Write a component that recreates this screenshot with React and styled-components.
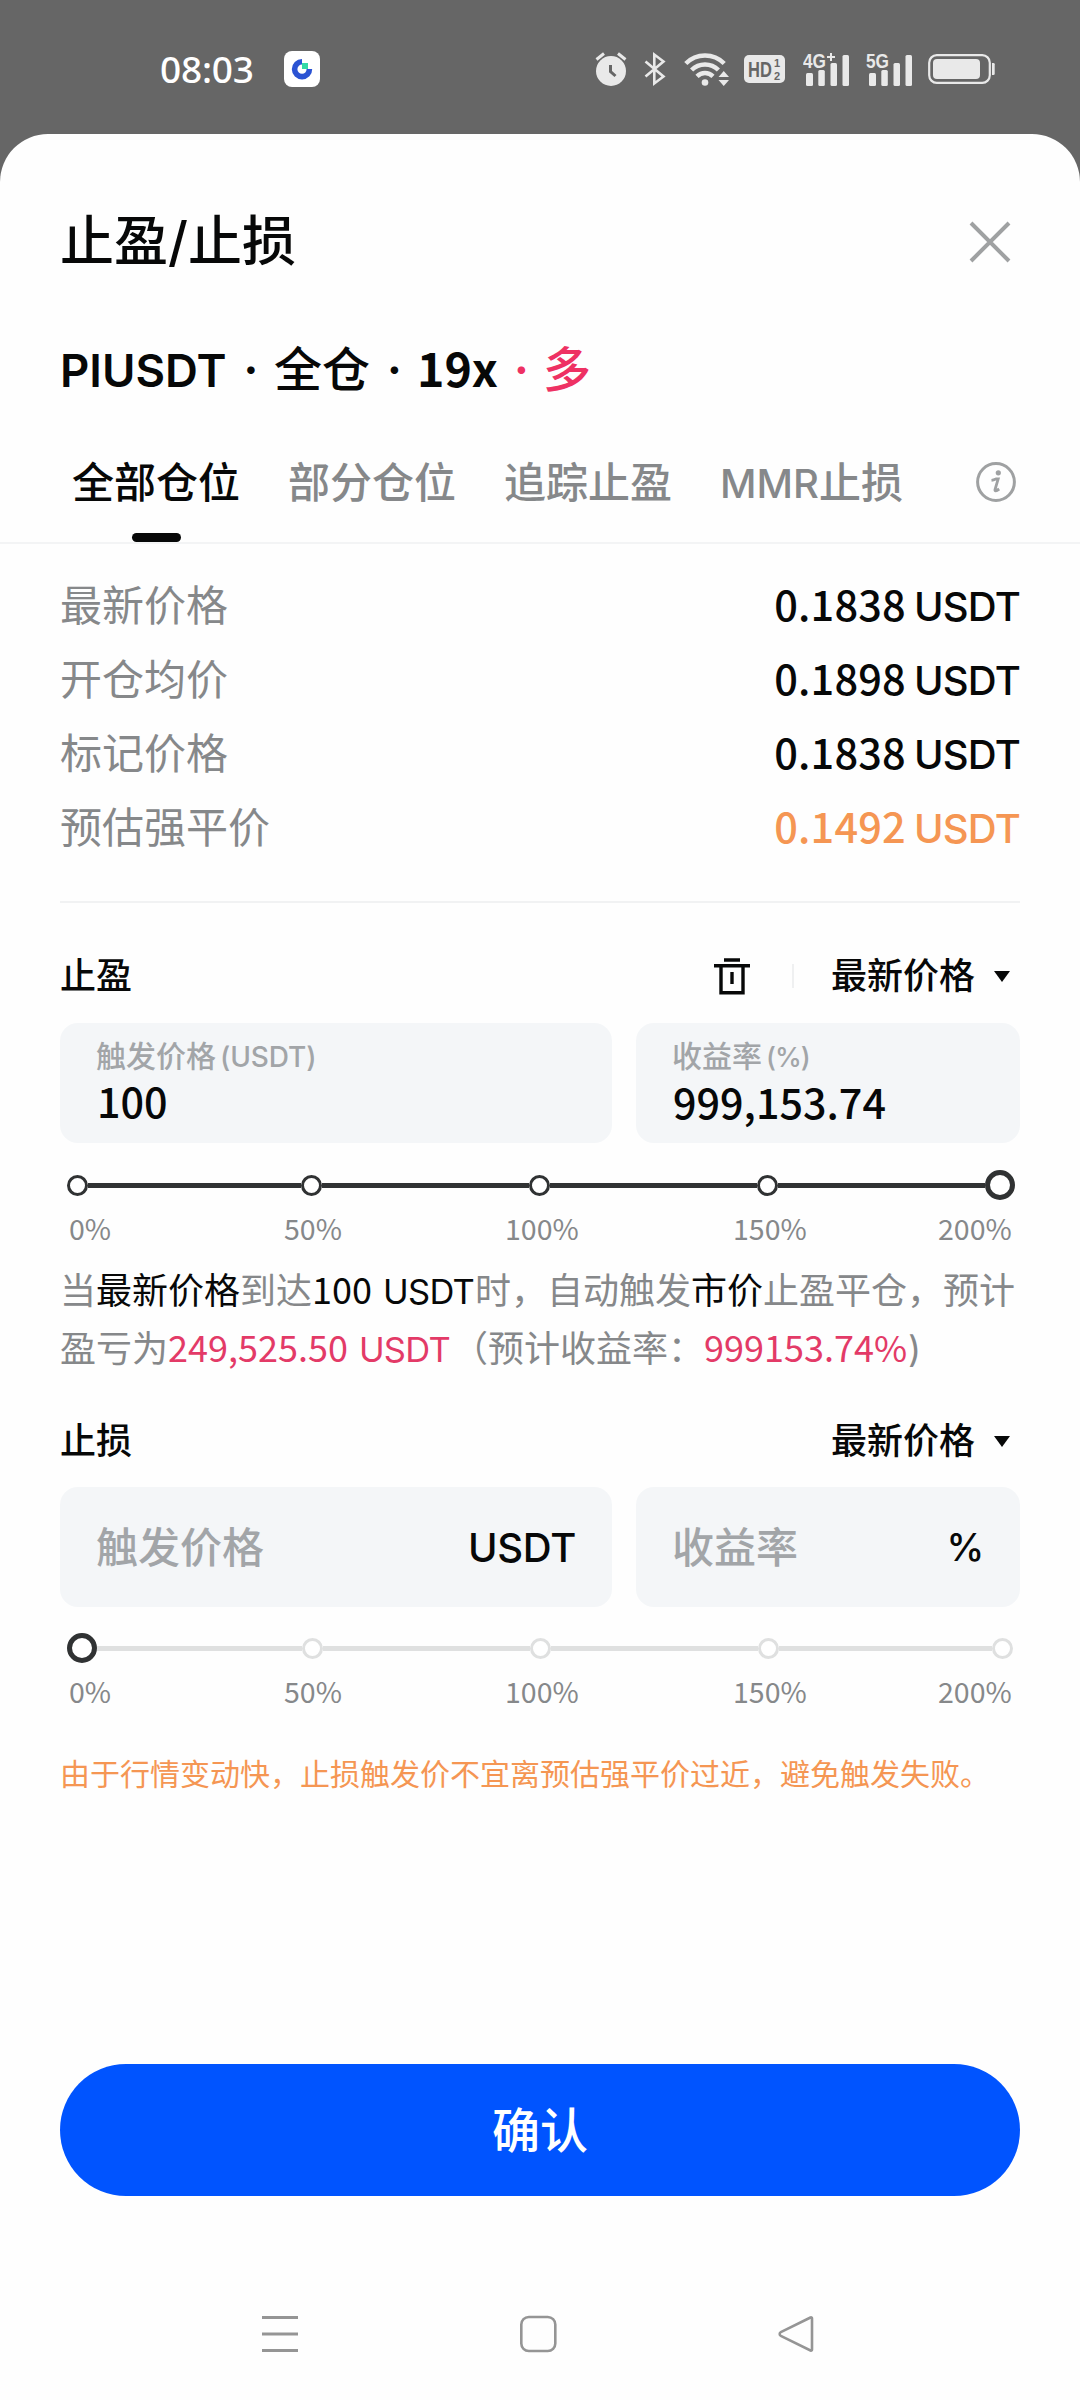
import React from "react";
import styled, { createGlobalStyle } from "styled-components";

const NUMERIC = '"Noto Sans CJK SC", sans-serif';

const Global = createGlobalStyle`
  * { box-sizing: border-box; }
  body {
    margin: 0;
    background: #666666;
    color: #070808;
    font-family: Inter, "Noto Sans CJK SC", sans-serif;
  }
  button { font: inherit; color: inherit; border: 0; padding: 0; background: none; }
`;

const Screen = styled.div`
  width: 1080px;
  height: 2400px;
  display: flex;
  flex-direction: column;
  background: #666666;
  overflow: hidden;
`;

const StatusBar = styled.header`
  height: 134px;
  padding: 4px 85px 0 160px;
  display: flex;
  align-items: center;
  flex: none;
`;

const Clock = styled.span`
  width: 124px;
  line-height: 48px;
  font-family: "Noto Sans", sans-serif;
  font-size: 37px;
  font-weight: 500;
  letter-spacing: -0.2px;
  color: #fff;
`;

const StatusIcons = styled.div`
  margin-left: auto;
  display: flex;
  align-items: center;
  color: #e9e9e9;
  svg { display: block; }
`;

const Spacer = styled.i`
  width: ${(p) => p.$w}px;
`;

const Sheet = styled.main`
  flex: 1;
  background: #fefefe;
  border-radius: 48px 48px 0 0;
  display: flex;
  flex-direction: column;
`;

const Header = styled.div`
  height: 216px;
  padding: 0 67px 0 60px;
  display: flex;
  align-items: center;
  justify-content: space-between;
`;

const Title = styled.h1`
  margin: 0;
  font-size: 54px;
  line-height: 72px;
  font-weight: 500;
`;

const Position = styled.div`
  height: 80px;
  margin: -23px 0 3px;
  padding-left: 60px;
  display: flex;
  align-items: baseline;
  font-size: 48px;
  font-weight: 600;
  line-height: 80px;
`;

const Part = styled.span`
  width: ${(p) => p.$w}px;
  font-family: ${(p) => (p.$numeric ? NUMERIC : "inherit")};
  font-size: ${(p) => p.$size || 48}px;
  font-weight: ${(p) => p.$weight || 600};
  color: ${(p) => p.$color || "inherit"};
  text-align: ${(p) => p.$align || "left"};
  white-space: nowrap;
`;

const Tabs = styled.nav`
  height: 134px;
  padding: 0 64px 0 72px;
  display: flex;
  align-items: stretch;
  gap: 48px;
  border-bottom: 2px solid #f3f4f5;
`;

const Tab = styled.button`
  display: flex;
  flex-direction: column;
  align-items: center;
  justify-content: space-between;
  padding-top: 43px;
  font-size: 42px;
  line-height: 60px;
  font-weight: 500;
  color: ${(p) => (p.$active ? "#070808" : "#86888a")};
  white-space: nowrap;
  &::after {
    content: "";
    width: 49px;
    height: 9px;
    border-radius: 5px;
    background: ${(p) => (p.$active ? "#070808" : "transparent")};
  }
`;

const Latin = styled.span`
  font-size: ${(p) => p.$size}px;
  letter-spacing: ${(p) => p.$ls || 0}px;
`;

const InfoButton = styled.button`
  margin-left: auto;
  display: flex;
  align-items: center;
  padding-top: 12px;
`;

const Body = styled.div`
  padding: 0 60px;
`;

const Prices = styled.dl`
  margin: 0;
  padding: 24px 0 37px;
  border-bottom: 2px solid #f1f2f3;
`;

const PriceRow = styled.div`
  height: 74px;
  display: flex;
  align-items: center;
  justify-content: space-between;
`;

const PriceName = styled.dt`
  padding-bottom: 6px;
  font-size: 42px;
  color: #86888a;
`;

const PriceValue = styled.dd`
  margin: 0;
  padding-bottom: 5px;
  display: flex;
  align-items: baseline;
  gap: 8px;
  font-size: 40px;
  font-weight: 500;
  letter-spacing: -0.8px;
  color: ${(p) => (p.$warn ? "#f59653" : "#070808")};
`;

const PriceNumber = styled.span`
  font-family: ${NUMERIC};
  font-size: 41.5px;
  letter-spacing: 0.2px;
`;

const SectionHead = styled.div`
  height: 60px;
  margin-top: ${(p) => p.$top}px;
  padding-right: 10px;
  display: flex;
  align-items: center;
  font-size: 36px;
  line-height: 60px;
  font-weight: 500;
`;

const SectionTitle = styled.span`
  flex: 1;
`;

const Rule = styled.i`
  width: 2px;
  height: 24px;
  margin: 0 37px 0 42px;
  background: #eff0f1;
`;

const Picker = styled.button`
  display: flex;
  align-items: center;
  gap: 19px;
`;

const Fields = styled.div`
  display: grid;
  grid-template-columns: 552px 384px;
  gap: 24px;
  margin-top: ${(p) => p.$top || 17}px;
`;

const Field = styled.label`
  height: 120px;
  padding: 0 36px;
  border-radius: 18px;
  background: #f4f6f8;
  display: flex;
  flex-direction: ${(p) => (p.$filled ? "column" : "row")};
  align-items: ${(p) => (p.$filled ? "flex-start" : "center")};
  justify-content: ${(p) => (p.$filled ? "flex-start" : "space-between")};
`;

const FieldLabel = styled.span`
  margin-top: 14px;
  font-size: 30px;
  line-height: 38px;
  font-weight: 500;
  word-spacing: -4px;
  color: #a2a5a8;
`;

const FieldValue = styled.span`
  padding-left: 1px;
  font-family: ${NUMERIC};
  font-size: 41.3px;
  line-height: 48px;
  font-weight: 500;
`;

const Placeholder = styled.span`
  padding-bottom: 6px;
  font-size: 42px;
  font-weight: 500;
  color: #a2a5a8;
`;

const Unit = styled.span`
  font-size: ${(p) => p.$size || 40}px;
  font-weight: 500;
  letter-spacing: -0.3px;
`;

const Track = styled.div`
  height: 32px;
  margin-top: ${(p) => p.$top}px;
  padding-left: 7px;
  display: flex;
  align-items: center;
`;

const Knob = styled.i`
  flex: none;
  width: ${(p) => (p.$big ? 30 : 21)}px;
  height: ${(p) => (p.$big ? 30 : 21)}px;
  border-radius: 50%;
  border: ${(p) => (p.$big ? 5 : 3)}px solid ${(p) => (p.$big || p.$on ? "#303233" : "#dfe0e0")};
  background: #fff;
`;

const Segment = styled.i`
  flex: none;
  width: ${(p) => p.$w}px;
  height: 5px;
  background: ${(p) => (p.$on ? "#303233" : "#dfe0e0")};
`;

const Scale = styled.div`
  display: grid;
  grid-template-columns: 215px 221px 228px 205px auto;
  margin-top: 7px;
  padding: 0 0 2px 9px;
  font-family: ${NUMERIC};
  font-size: 28.5px;
  line-height: 40px;
  color: #86888a;
`;

const Summary = styled.p`
  margin: 12px 0 0;
  width: 970px;
  height: 116px;
  font-size: 36px;
  line-height: 58px;
  color: #86888a;
  white-space: nowrap;
`;

const Strong = styled.span`
  color: #070808;
`;

const Figure = styled.span`
  display: inline-block;
  width: ${(p) => p.$w}px;
  font-size: 34.5px;
  line-height: 40px;
  letter-spacing: -0.7px;
  color: ${(p) => (p.$red ? "#e33a67" : "#070808")};
`;

const FigureNumber = styled.span`
  margin-right: ${(p) => (p.$unit ? 11 : 0)}px;
  font-family: ${NUMERIC};
  font-size: 36px;
  line-height: 30px;
  letter-spacing: 0;
`;

const Warning = styled.p`
  margin: 41px 0 0;
  font-size: 30px;
  line-height: 40px;
  color: #f59653;
  white-space: nowrap;
`;

const Confirm = styled.button`
  width: 960px;
  height: 132px;
  margin: auto 60px 0;
  padding-bottom: 6px;
  border-radius: 66px;
  background: #0054ff;
  color: #fff;
  font-size: 48px;
  font-weight: 500;
`;

const NavBar = styled.footer`
  height: 132px;
  margin-top: 72px;
  padding: 0 266px 0 261px;
  display: flex;
  align-items: center;
  justify-content: space-between;
  svg { display: block; }
`;

const AppLogo = () => (
  <svg width="36" height="36" viewBox="0 0 36 36">
    <rect width="36" height="36" rx="8" fill="#fff" />
    <path d="M18 10.8A7.4 7.4 0 1 0 25.4 18" fill="none" stroke="#2b53d3" strokeWidth="5.6" />
    <rect x="18" y="12" width="6" height="6" fill="#33d9a6" />
  </svg>
);

const AlarmIcon = () => (
  <svg width="32" height="36" viewBox="0 0 32 36" fill="none">
    <circle cx="16" cy="20" r="15" fill="currentColor" />
    <path d="M1.5 8.5 9 2.5M30.5 8.5 23 2.5" stroke="currentColor" strokeWidth="3" />
    <path d="M15.5 14v6.5l5 4.5" stroke="#666" strokeWidth="3" />
  </svg>
);

const BluetoothIcon = () => (
  <svg width="22" height="36" viewBox="0 0 22 36" fill="none" stroke="currentColor" strokeWidth="2.6">
    <path d="M1.5 10.5 19.5 25.5 10.3 32.5V3.5L19.5 10.5 1.5 25.5" />
  </svg>
);

const WifiIcon = () => (
  <svg width="46" height="36" viewBox="0 0 46 36" fill="none">
    <g stroke="currentColor" strokeWidth="4.5">
      <path d="M1.8 12.5a27 27 0 0 1 38.4 0" />
      <path d="M7.6 19a19 19 0 0 1 26.8 0" />
      <path d="M13 25.3a11.5 11.5 0 0 1 16 0" />
    </g>
    <circle cx="21" cy="31.5" r="3.3" fill="currentColor" />
    <path d="M34.5 26h10.5l-5.25-6zM34.5 29h10.5l-5.25 6z" fill="currentColor" />
  </svg>
);

const HdIcon = () => (
  <svg width="41" height="28" viewBox="0 0 41 28" fontFamily="Liberation Sans, sans-serif" fontWeight="700" fill="#666">
    <rect width="41" height="28" rx="5" fill="#e9e9e9" />
    <text transform="translate(4 22) scale(0.75 1)" fontSize="22">HD</text>
    <text x="30" y="12" fontSize="11">1</text>
    <text x="30" y="25" fontSize="11">2</text>
  </svg>
);

const SignalIcon = ({ label, plus }) => (
  <svg width="49" height="36" viewBox="0 0 49 36" fill="currentColor">
    <text x="0" y="17" fontSize="20" fontWeight="700" fontFamily="Liberation Sans, sans-serif" textLength="23" lengthAdjust="spacingAndGlyphs">{label}</text>
    {plus && <path d="M24 6h8M28 2v8" stroke="currentColor" strokeWidth="2" />}
    <rect x="3" y="22" width="7" height="13" rx="1.5" />
    <rect x="15.3" y="19" width="6.5" height="16" rx="1.5" />
    <rect x="27.5" y="12" width="6.5" height="23" rx="1.5" />
    <rect x="39.5" y="4" width="6.5" height="31" rx="1.5" />
  </svg>
);

const BatteryIcon = () => (
  <svg width="67" height="30" viewBox="0 0 67 30" fill="none">
    <rect x="1.2" y="1.2" width="60.6" height="27.6" rx="7.5" stroke="currentColor" strokeWidth="2.2" />
    <rect x="5" y="5" width="47" height="20" rx="4" fill="currentColor" />
    <path d="M64 9h1.5a1.2 1.2 0 0 1 1.2 1.2v9.6a1.2 1.2 0 0 1-1.2 1.2H64z" fill="currentColor" />
  </svg>
);

const CloseIcon = () => (
  <svg width="46" height="46" viewBox="0 0 46 46" stroke="#9fa1a2" strokeWidth="4" fill="none">
    <path d="M4 4 42 42M42 4 4 42" />
  </svg>
);

const InfoIcon = () => (
  <svg width="40" height="40" viewBox="0 0 40 40" fill="none">
    <circle cx="20" cy="20" r="18.4" stroke="#9fa1a2" strokeWidth="3" />
    <circle cx="22.3" cy="10.8" r="2.6" fill="#9fa1a2" />
    <path d="M15.5 18.3c2-.2 3.3-.8 4.7-1.4h2l-3.2 10.8c-.4 1.6 1 1.6 4.2-.7" stroke="#9fa1a2" strokeWidth="2.8" />
  </svg>
);

const TrashIcon = () => (
  <svg width="36" height="37" viewBox="0 0 36 37" fill="none" stroke="#070808" strokeWidth="3.4">
    <path d="M10 2h16M0 7.8h36M7 8v26.8h22V8" />
    <path d="M18 14v12" />
  </svg>
);

const Caret = () => (
  <svg width="16" height="11" viewBox="0 0 16 11">
    <path d="M0 0h16L8 11z" fill="#070808" />
  </svg>
);

const MenuIcon = () => (
  <svg width="38" height="38" viewBox="0 0 38 38" stroke="#959595" strokeWidth="3">
    <path d="M1 2.5h36M1 19h36M1 35.5h36" />
  </svg>
);

const HomeIcon = () => (
  <svg width="38" height="38" viewBox="0 0 38 38" fill="none">
    <rect x="1.3" y="2" width="34" height="34" rx="7.5" stroke="#959595" strokeWidth="2.6" />
  </svg>
);

const BackIcon = () => (
  <svg width="36" height="38" viewBox="0 0 36 38" fill="none">
    <path d="M32.5 2.5 2.8 17.2a2 2 0 0 0 0 3.6L32.5 35.5q1.5.5 1.5-1V3.5q0-1.5-1.5-1z" stroke="#959595" strokeWidth="2.6" />
  </svg>
);

const PRICES = [
  { name: "最新价格", value: "0.1838" },
  { name: "开仓均价", value: "0.1898" },
  { name: "标记价格", value: "0.1838" },
  { name: "预估强平价", value: "0.1492", warn: true },
];

const TICKS = ["0%", "50%", "100%", "150%", "200%"];

function PriceSlider({ top, value, segments }) {
  return (
    <>
      <Track $top={top}>
        {TICKS.map((tick, i) => (
          <React.Fragment key={tick}>
            {i > 0 && <Segment $w={segments[i - 1]} $on={i <= value} />}
            <Knob $big={i === value} $on={i < value} />
          </React.Fragment>
        ))}
      </Track>
      <Scale>
        {TICKS.map((tick) => (
          <span key={tick}>{tick}</span>
        ))}
      </Scale>
    </>
  );
}

export default function App() {
  return (
    <Screen>
      <Global />
      <StatusBar>
        <Clock>08:03</Clock>
        <AppLogo />
        <StatusIcons>
          <AlarmIcon />
          <Spacer $w={17} />
          <BluetoothIcon />
          <Spacer $w={18} />
          <WifiIcon />
          <Spacer $w={14} />
          <HdIcon />
          <Spacer $w={18} />
          <SignalIcon label="4G" plus />
          <Spacer $w={14} />
          <SignalIcon label="5G" />
          <Spacer $w={13} />
          <BatteryIcon />
        </StatusIcons>
      </StatusBar>

      <Sheet>
        <Header>
          <Title>止盈/止损</Title>
          <CloseIcon />
        </Header>

        <Position>
          <Part $w={168} $size={45.5}>PIUSDT</Part>
          <Part $w={46} $align="center">·</Part>
          <Part $w={98} $weight={500}>全仓</Part>
          <Part $w={45} $align="center">·</Part>
          <Part $w={83} $size={46.5} $weight={700} $numeric>19x</Part>
          <Part $w={43} $align="center" $color="#ee3163">·</Part>
          <Part $w={48} $weight={500} $color="#ee3163">多</Part>
        </Position>

        <Tabs>
          <Tab $active>全部仓位</Tab>
          <Tab>部分仓位</Tab>
          <Tab>追踪止盈</Tab>
          <Tab><span><Latin $size={40}>MMR</Latin>止损</span></Tab>
          <InfoButton><InfoIcon /></InfoButton>
        </Tabs>

        <Body>
          <Prices>
            {PRICES.map((p) => (
              <PriceRow key={p.name}>
                <PriceName>{p.name}</PriceName>
                <PriceValue $warn={p.warn}>
                  <PriceNumber>{p.value}</PriceNumber>
                  <span>USDT</span>
                </PriceValue>
              </PriceRow>
            ))}
          </Prices>

          <SectionHead $top={43}>
            <SectionTitle>止盈</SectionTitle>
            <TrashIcon />
            <Rule />
            <Picker>最新价格<Caret /></Picker>
          </SectionHead>
          <Fields>
            <Field $filled>
              <FieldLabel>触发价格 <Latin $size={28} $ls={-0.1}>(USDT)</Latin></FieldLabel>
              <FieldValue>100</FieldValue>
            </Field>
            <Field $filled>
              <FieldLabel>收益率 <Latin $size={27} $ls={-1}>(%)</Latin></FieldLabel>
              <FieldValue>999,153.74</FieldValue>
            </Field>
          </Fields>
          <PriceSlider top={26} value={4} segments={[213, 207, 207, 207]} />
          <Summary>
            当<Strong>最新价格</Strong>到达<Figure $w={163}><FigureNumber $unit>100</FigureNumber>USDT</Figure>时，自动触发<Strong>市价</Strong>止盈平仓，预计
            <br />
            盈亏为<Figure $w={284} $red><FigureNumber $unit>249,525.50</FigureNumber>USDT</Figure>（预计收益率：<Figure $w={204} $red><FigureNumber>999153.74%</FigureNumber></Figure>)
          </Summary>

          <SectionHead $top={33}>
            <SectionTitle>止损</SectionTitle>
            <Picker>最新价格<Caret /></Picker>
          </SectionHead>
          <Fields $top={16}>
            <Field>
              <Placeholder>触发价格</Placeholder>
              <Unit>USDT</Unit>
            </Field>
            <Field>
              <Placeholder>收益率</Placeholder>
              <Unit $size={38}>%</Unit>
            </Field>
          </Fields>
          <PriceSlider top={25} value={0} segments={[205, 207, 207, 213]} />
          <Warning>由于行情变动快，止损触发价不宜离预估强平价过近，避免触发失败。</Warning>
        </Body>

        <Confirm>确认</Confirm>
        <NavBar>
          <MenuIcon />
          <HomeIcon />
          <BackIcon />
        </NavBar>
      </Sheet>
    </Screen>
  );
}
